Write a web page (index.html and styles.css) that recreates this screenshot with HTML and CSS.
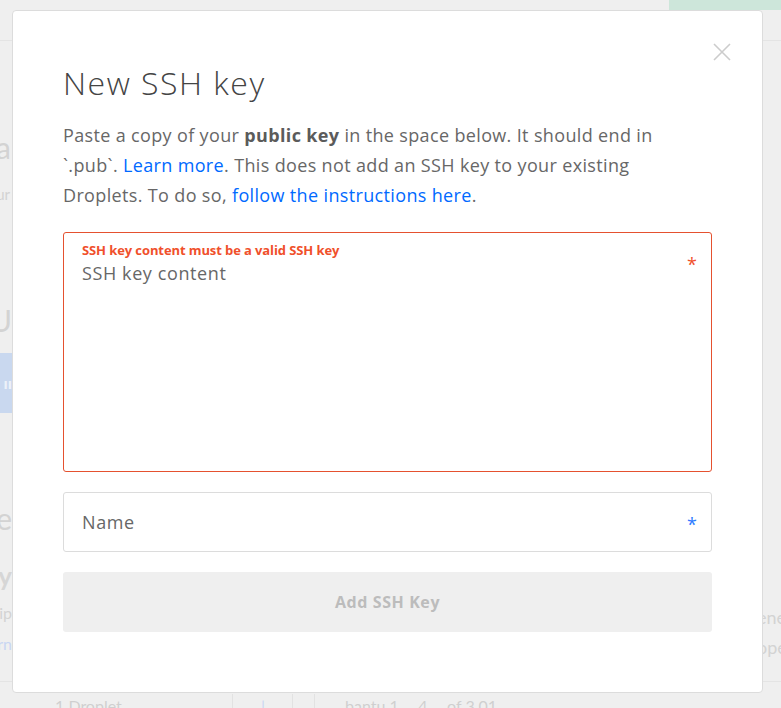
FILE: index.html
```html
<!DOCTYPE html>
<html>
<head>
<meta charset="utf-8">
<link rel="stylesheet" href="styles.css">
</head>
<body>
<div class="page">
  <div class="topbar">
    <div class="topbar-fill"></div>
    <div class="green-btn"></div>
  </div>
  <div class="middle">
    <div class="strip strip-left">
      <span class="frag f-a">Data</span>
      <span class="frag f-r">Our</span>
      <span class="frag f-u">Add U</span>
      <span class="frag-block"><span>ıı</span></span>
      <span class="frag f-e">Use</span>
      <span class="frag f-ny">Any</span>
      <span class="frag f-ip">Ship</span>
      <span class="frag f-n">Learn</span>
    </div>
    <div class="spacer"></div>
    <div class="strip strip-right">
      <span class="frag-r f-er">ener</span>
      <span class="frag-r f-pe">oper</span>
    </div>
  </div>
  <div class="bottombar">
    <span class="bb-text bb-1">1 Droplet</span>
    <span class="bb-sep bb-s1"></span>
    <span class="bb-text bb-2">|</span>
    <span class="bb-sep bb-s2"></span>
    <span class="bb-sep bb-s3"></span>
    <span class="bb-text bb-3">bantu 1 ... 4 ... of 3.01</span>
  </div>
</div>

<div class="modal">
  <button class="close" aria-label="Close">
    <svg width="18" height="18" viewBox="0 0 18 18"><path d="M1 1 L17 17 M17 1 L1 17" stroke="#cccccc" stroke-width="1.6" fill="none"/></svg>
  </button>
  <h1 class="title">New SSH key</h1>
  <p class="desc">Paste a copy of your <b>public key</b> in the space below. It should end in `.pub`. <a class="link">Learn more</a>. This does not add an SSH key to your existing Droplets. To do so, <a class="link">follow the instructions here</a>.</p>
  <div class="field field-error">
    <div class="error-label">SSH key content must be a valid SSH key</div>
    <div class="placeholder">SSH key content</div>
    <span class="req req-red">*</span>
  </div>
  <div class="field field-name">
    <div class="placeholder">Name</div>
    <span class="req req-blue">*</span>
  </div>
  <button class="submit">Add SSH Key</button>
</div>
</body>
</html>
```
FILE: styles.css
```css
html, body {
  margin: 0;
  padding: 0;
  height: 100%;
}
body {
  background: #efefef;
  font-family: "Open Sans", "Lato", sans-serif;
  overflow: hidden;
}
.page {
  display: flex;
  flex-direction: column;
  height: 708px;
}
.topbar {
  height: 41px;
  border-bottom: 1px solid #e4e4e4;
  display: flex;
  box-sizing: border-box;
}
.topbar-fill { flex: 1; }
.green-btn {
  width: 112px;
  height: 10px;
  background: #cde6da;
}
.middle {
  display: flex;
  height: 641px;
  border-bottom: 1px solid #e4e4e4;
  box-sizing: border-box;
}
.strip {
  display: flex;
  flex-direction: column;
  overflow: hidden;
}
.strip-left {
  width: 12px;
  align-items: flex-end;
}
.spacer { flex: 1; }
.strip-right {
  width: 18px;
  align-items: flex-start;
}
.frag, .frag-r {
  white-space: nowrap;
  color: #d3d3d3;
  line-height: 1;
  font-family: "Lato", sans-serif;
}
.frag-r { margin-left: -6px; }
.f-a { font-size: 30px; margin-top: 91px; margin-right: 1px; }
.f-r { font-size: 15px; margin-top: 25px; margin-right: 2px; }
.f-u { font-size: 30px; margin-top: 103px; margin-right: 0; }
.frag-block {
  width: 12px;
  height: 60px;
  background: #c9d8ef;
  margin-top: 18px;
  display: flex;
  align-items: center;
  justify-content: flex-end;
  color: #eef2f9;
  font-size: 14px;
  font-weight: 700;
}
.f-e { font-size: 30px; margin-top: 90px; margin-right: 0; }
.f-ny { font-size: 26px; margin-top: 30px; font-weight: 700; color: #d6d6d6; }
.f-ip { font-size: 16px; margin-top: 16px; margin-right: 0; }
.f-n { font-size: 16px; margin-top: 15px; color: #c8d6f3; }
.f-er { font-size: 18px; margin-top: 567px; }
.f-pe { font-size: 18px; margin-top: 12px; }
.bottombar {
  flex: 1;
  display: flex;
  align-items: flex-end;
  overflow: hidden;
}
.bb-text {
  color: #cfcfcf;
  font-size: 16px;
  line-height: 1;
  margin-bottom: -6px;
  white-space: nowrap;
  font-family: "Lato", sans-serif;
}
.bb-1 { margin-left: 55px; width: 177px; }
.bb-sep {
  width: 1px;
  height: 14px;
  background: #e2e2e2;
  align-self: flex-end;
}
.bb-2 { margin-left: 28px; width: 31px; color: #c8d6f3; }
.bb-s2 { margin-right: 21px; }
.bb-3 { margin-left: 30px; }

.link { color: #0069ff; text-decoration: none; cursor: pointer; }

.modal {
  position: absolute;
  top: 10px;
  left: 12px;
  width: 751px;
  height: 683px;
  box-sizing: border-box;
  background: #fff;
  border: 1px solid #dcdcdc;
  border-radius: 4px;
  padding: 52px 50px 50px 50px;
  display: flex;
  flex-direction: column;
}
.close {
  position: absolute;
  top: 32px;
  right: 31px;
  width: 18px;
  height: 18px;
  padding: 0;
  border: 0;
  background: none;
  display: flex;
}
.title {
  margin: 0;
  font-size: 32px;
  font-weight: 300;
  color: #444;
  line-height: 40px;
  letter-spacing: 1.5px;
}
.desc {
  margin: 17px 0 0;
  font-size: 18px;
  line-height: 30px;
  color: #676767;
  letter-spacing: 0.35px;
}
.desc b { font-weight: 700; color: #5b5b5b; }
.field {
  position: relative;
  box-sizing: border-box;
  border: 1px solid #dcdcdc;
  border-radius: 3px;
  padding: 0 18px;
}
.field-error {
  margin-top: 22px;
  height: 240px;
  border-color: #e5512f;
  padding-top: 9px;
}
.error-label {
  font-size: 13px;
  font-weight: 700;
  color: #f0502b;
  line-height: 17px;
  letter-spacing: -0.1px;
  margin-bottom: 1px;
}
.placeholder {
  font-size: 18px;
  color: #676767;
  line-height: 26px;
  letter-spacing: 0.6px;
}
.field-name {
  margin-top: 20px;
  height: 60px;
  display: flex;
  align-items: center;
}
.req {
  position: absolute;
  right: 14px;
  font-size: 18px;
  line-height: 1;
}
.req-red { color: #f0502b; top: 22px; }
.req-blue { color: #2d7bff; top: 22px; }
.submit {
  margin-top: 20px;
  height: 60px;
  border: 0;
  border-radius: 3px;
  background: #efefef;
  color: #bcbcbc;
  font-family: inherit;
  font-size: 16px;
  font-weight: 700;
  letter-spacing: 0.6px;
}
```
